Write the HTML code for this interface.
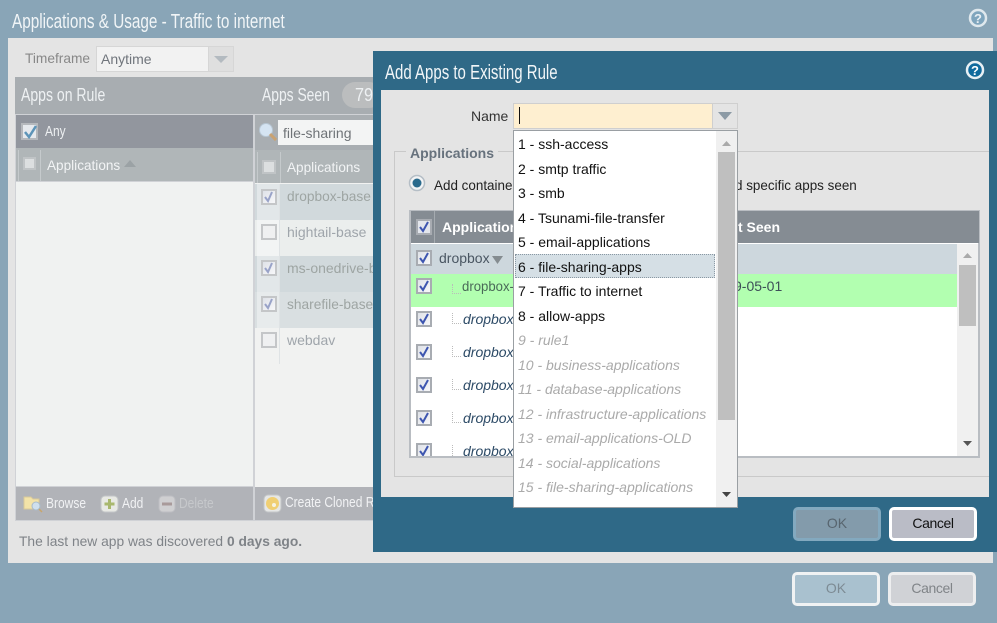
<!DOCTYPE html>
<html><head><meta charset="utf-8">
<style>
html,body{margin:0;padding:0}
body{width:997px;height:623px;overflow:hidden;position:relative;background:#89a5b7;font-family:"Liberation Sans",sans-serif;font-size:14px}
div,span.t{position:absolute;box-sizing:border-box}
.t{white-space:nowrap;line-height:18px;transform-origin:0 50%}
.cb{width:16px;height:16px;border:2px solid #a8acb2;background:linear-gradient(135deg,#dfe2e8,#f7f7f9)}
.cb svg{position:absolute;left:0;top:0}
.fb{border-color:#c4c6c8}
.btn{border:3px solid #fff;border-radius:5px;text-align:center;line-height:26px;font-size:14px}
.it{left:518px;color:#111;font-size:14px}
.dis{color:#aaa;font-style:italic}
.i{font-style:italic;color:#2c4a66}
</style></head><body>

<div class="t" style="left:12px;top:11px;color:#f1f5f7;font-size:20px;line-height:22px;transform:scaleX(.765)">Applications &amp; Usage - Traffic to internet</div>
<svg style="position:absolute;left:968px;top:8px" width="20" height="20"><circle cx="10" cy="10" r="8" fill="#7fa5bd" stroke="#dfe8ed" stroke-width="2.500"/><text x="10" y="15" font-size="13" font-weight="bold" fill="#e8eff3" text-anchor="middle" font-family="Liberation Sans">?</text></svg>

<div style="left:8px;top:38px;width:985px;height:525px;background:#e4e4e4"></div>
<div class="t" style="left:25px;top:49px;color:#888;font-size:14px;transform:scaleX(.98)">Timeframe</div>
<div style="left:96px;top:46px;width:138px;height:26px;background:#f2f2f2;border:1px solid #d6d6d6"></div>
<div style="left:208px;top:46px;width:26px;height:26px;background:#dfdfdf;border:1px solid #d6d6d6"></div>
<svg style="position:absolute;left:213px;top:55px" width="16" height="9"><path d="M1 1H15L8 8Z" fill="#b3bac0"/></svg>
<div class="t" style="left:101px;top:50px;color:#70757c;font-size:14px">Anytime</div>

<div style="left:15px;top:77px;width:358px;height:37px;background:#a8adb1"></div>
<div class="t" style="left:21px;top:85px;color:#eef1f3;font-size:18px;line-height:20px;transform:scaleX(.78)">Apps on Rule</div>
<div class="t" style="left:262px;top:85px;color:#eef1f3;font-size:18px;line-height:20px;transform:scaleX(.77)">Apps Seen</div>
<div style="left:342px;top:82px;width:40px;height:26px;border-radius:13px;background:#bbbdbe"></div>
<div class="t" style="left:355px;top:85px;color:#eef1f3;font-size:18px;line-height:20px;transform:scaleX(.9)">79</div>

<div style="left:15px;top:114px;width:358px;height:407px;background:#d0d2d6"></div>
<div style="left:16px;top:115px;width:237px;height:33px;background:#92969e"></div>
<div class="cb" style="left:21px;top:123px;width:17px;height:17px;border-color:#b5b8bc;background:#e6e9ed"><svg width="15" height="15"><path d="M2 7L6 12L13 1" fill="none" stroke="#5d94b8" stroke-width="2.500"/></svg></div>
<div class="t" style="left:45px;top:123px;color:#eef0f2;font-size:15px;transform:scaleX(.8)">Any</div>
<div style="left:16px;top:148px;width:237px;height:33px;background:#b0b6b8"></div>
<div style="left:18px;top:150px;width:1px;height:31px;background:#c5cacc"></div>
<div style="left:40px;top:150px;width:1px;height:31px;background:#c5cacc"></div>
<div class="cb" style="left:23px;top:157px;width:13px;height:13px;border-color:#c0c4c6;background:#dcdfe0"></div>
<div class="t" style="left:47px;top:156px;color:#f2f4f5;font-size:14px;transform:scaleX(.97)">Applications</div>
<svg style="position:absolute;left:123px;top:159px" width="14" height="9"><path d="M1 8H13L7 1Z" fill="#9ba2a5"/></svg>
<div style="left:16px;top:182px;width:237px;height:304px;background:#f0f2f1"></div>
<div style="left:16px;top:487px;width:237px;height:33px;background:#b1b3b8"></div>

<svg style="position:absolute;left:23px;top:495px" width="20" height="18"><path d="M1 2H8L10 4H16V14H1Z" fill="#f3e3a8" stroke="#d8c89a"/><circle cx="13" cy="11" r="4" fill="#cfe0ee" stroke="#a9bccb"/><path d="M16 14L19 17" stroke="#c9a56a" stroke-width="1.500"/></svg>
<div class="t" style="left:46px;top:495px;color:#f1f2f4;font-size:15px;transform:scaleX(.8)">Browse</div>
<svg style="position:absolute;left:100px;top:495px" width="19" height="18"><rect x="1" y="1" width="17" height="16" rx="4" fill="#e8e9e4" stroke="#c2c5c7"/><path d="M9.500 4V14M4.500 9H14.500" stroke="#a9b86e" stroke-width="3"/></svg>
<div class="t" style="left:122px;top:495px;color:#f1f2f4;font-size:15px;transform:scaleX(.8)">Add</div>
<svg style="position:absolute;left:158px;top:495px" width="18" height="18"><rect x="1" y="1" width="16" height="16" rx="4" fill="#cfcfd1" stroke="#bdbec2"/><path d="M4 9H14" stroke="#a89a9a" stroke-width="3"/></svg>
<div class="t" style="left:179px;top:495px;color:#c6c8cb;font-size:15px;transform:scaleX(.8)">Delete</div>

<div style="left:255px;top:115px;width:118px;height:35px;background:#a9aeb2"></div>
<svg style="position:absolute;left:258px;top:122px" width="19" height="19"><circle cx="8" cy="8" r="6.500" fill="#d5e4f2" stroke="#b7c6d3"/><path d="M12 12L18 18" stroke="#c9a271" stroke-width="3"/></svg>
<div style="left:278px;top:120px;width:95px;height:25px;background:#f3f4f4"></div>
<div class="t" style="left:283px;top:124px;color:#6f7377;font-size:14px">file-sharing</div>
<div style="left:255px;top:150px;width:118px;height:33px;background:#b0b6b8"></div>
<div style="left:257px;top:152px;width:1px;height:31px;background:#c5cacc"></div>
<div style="left:280px;top:152px;width:1px;height:31px;background:#c5cacc"></div>
<div class="cb" style="left:262px;top:160px;width:14px;height:14px;border-color:#c0c4c6;background:#dcdfe0"></div>
<div class="t" style="left:287px;top:158px;color:#f2f4f5;font-size:14px;transform:scaleX(.97)">Applications</div>

<div style="left:255px;top:183px;width:118px;height:304px;background:#f1f2f1"></div>
<div style="left:255px;top:184px;width:118px;height:36px;background:#d1d9dc"></div>
<div style="left:255px;top:220px;width:118px;height:36px;background:#ebeeed"></div>
<div style="left:255px;top:256px;width:118px;height:36px;background:#d1d9dc"></div>
<div style="left:255px;top:292px;width:118px;height:36px;background:#d9dfe1"></div>
<div style="left:257px;top:184px;width:22px;height:144px;background:rgba(255,255,255,.38)"></div>
<div style="left:279px;top:184px;width:1px;height:180px;background:#dfe3e5"></div>
<div class="cb fb" style="left:261px;top:189px"><svg width="12" height="12"><path d="M2 6L5 10L9 1" fill="none" stroke="#99a3c8" stroke-width="2"/></svg></div>
<div class="t" style="left:287px;top:187px;color:#9ea5a3;font-size:14px;transform:scaleX(.98)">dropbox-base</div>
<div class="cb fb" style="left:261px;top:224px;background:#eff0f1"></div>
<div class="t" style="left:287px;top:223px;color:#9fa5ab;font-size:14px">hightail-base</div>
<div class="cb fb" style="left:261px;top:260px"><svg width="12" height="12"><path d="M2 6L5 10L9 1" fill="none" stroke="#99a3c8" stroke-width="2"/></svg></div>
<div class="t" style="left:287px;top:259px;color:#9ea5a3;font-size:14px">ms-onedrive-b</div>
<div class="cb fb" style="left:261px;top:296px"><svg width="12" height="12"><path d="M2 6L5 10L9 1" fill="none" stroke="#99a3c8" stroke-width="2"/></svg></div>
<div class="t" style="left:287px;top:295px;color:#9ea5a3;font-size:14px;transform:scaleX(.98)">sharefile-base</div>
<div class="cb fb" style="left:261px;top:332px;background:#eff0f1"></div>
<div class="t" style="left:287px;top:331px;color:#9fa5ab;font-size:14px">webdav</div>

<div style="left:255px;top:487px;width:118px;height:33px;background:#b1b3b8"></div>
<svg style="position:absolute;left:263px;top:494px" width="19" height="19"><rect x="1" y="1" width="17" height="17" rx="4" fill="#e6e7e6" stroke="#c2c5c7"/><circle cx="9.500" cy="9.500" r="6.500" fill="#f0cf73"/><circle cx="11" cy="11" r="2" fill="#f6f3e4"/></svg>
<div class="t" style="left:285px;top:494px;color:#f1f2f4;font-size:15px;transform:scaleX(.8)">Create Cloned R</div>

<div class="t" style="left:19px;top:532px;color:#7f8388;font-size:14px;transform:scaleX(.986)">The last new app was discovered <b>0 days ago.</b></div>

<div class="btn" style="left:792px;top:572px;width:88px;height:34px;background:#a9c1cf;color:#7d8b94;border-color:#f0f2f3">OK</div>
<div class="btn" style="left:888px;top:572px;width:88px;height:34px;background:#d0d2d6;color:#808488;border-color:#edeeef;letter-spacing:-.4px">Cancel</div>

<!-- modal -->
<div style="left:373px;top:51px;width:624px;height:501px;background:#2f6987"></div>
<div class="t" style="left:385px;top:62px;color:#f2f6f8;font-size:20px;line-height:22px;transform:scaleX(.75)">Add Apps to Existing Rule</div>
<svg style="position:absolute;left:965px;top:60px" width="20" height="20"><circle cx="10" cy="10" r="8" fill="#0f6a9d" stroke="#e8f0f4" stroke-width="2.500"/><text x="10" y="15" font-size="13" font-weight="bold" fill="#fff" text-anchor="middle" font-family="Liberation Sans">?</text></svg>
<div style="left:381px;top:90px;width:608px;height:407px;background:#e4e4e4"></div>

<div class="t" style="left:471px;top:107px;color:#333;font-size:14px">Name</div>
<div style="left:513px;top:103px;width:200px;height:26px;background:#feefd0;border:1px solid #cfcfcf"></div>
<div style="left:519px;top:107px;width:1px;height:17px;background:#111"></div>
<div style="left:712px;top:103px;width:26px;height:26px;background:#e4e4e4;border:1px solid #cfcfcf"></div>
<svg style="position:absolute;left:717px;top:111px" width="16" height="10"><path d="M1 1H15L8 9Z" fill="#8c9aa5"/></svg>

<div style="left:394px;top:151px;width:595px;height:326px;border:1px solid #c9c9c9;border-right:0"></div>
<div class="t" style="left:406px;top:144px;padding:0 4px;background:#e4e4e4;color:#67727d;font-size:14px;font-weight:bold">Applications</div>

<svg style="position:absolute;left:408px;top:174px" width="18" height="18"><circle cx="9" cy="9" r="7.500" fill="#f3f4f5" stroke="#b5bec6" stroke-width="1.500"/><circle cx="9" cy="9" r="4.500" fill="#2a6a8c"/></svg>
<div class="t" style="left:434px;top:176px;color:#222;font-size:14px;transform:scaleX(.96)">Add containe</div>
<div class="t" style="left:735px;top:176px;color:#222;font-size:14px;transform:scaleX(.96)">d specific apps seen</div>

<!-- table -->
<div style="left:409px;top:210px;width:571px;height:248px;background:#fff;border:2px solid #b9bdc2;overflow:hidden"></div>
<div style="left:411px;top:211px;width:568px;height:32px;background:#858c93"></div>
<div style="left:434px;top:211px;width:1px;height:32px;background:#a5abb0"></div>
<div class="cb" style="left:416px;top:219px;background:#e3e6ec"><svg width="12" height="12"><path d="M2 6L5 10L10 1" fill="none" stroke="#3e56b0" stroke-width="2"/></svg></div>
<div class="t" style="left:442px;top:218px;color:#fff;font-size:14px;font-weight:bold">Application</div>
<div class="t" style="left:738px;top:218px;color:#fff;font-size:14px;font-weight:bold">t Seen</div>
<div style="left:411px;top:244px;width:546px;height:30px;background:#cdd7dd"></div>
<div class="cb" style="left:416px;top:250px"><svg width="12" height="12"><path d="M2 6L5 10L10 1" fill="none" stroke="#3e56b0" stroke-width="2"/></svg></div>
<div class="t" style="left:439px;top:249px;color:#4a5662;font-size:14px">dropbox</div>
<svg style="position:absolute;left:491px;top:255px" width="13" height="10"><path d="M1 1H12L6.500 9Z" fill="#858c90"/></svg>
<div style="left:411px;top:274px;width:546px;height:33px;background:#b2ffb0"></div>
<div class="cb" style="left:416px;top:278px"><svg width="12" height="12"><path d="M2 6L5 10L10 1" fill="none" stroke="#3e56b0" stroke-width="2"/></svg></div>
<div style="left:452px;top:284px;width:9px;height:10px;border-left:1px dotted #bbb;border-bottom:1px dotted #bbb"></div>
<div class="t" style="left:462px;top:277px;color:#4a6a58;font-size:14px;transform:scaleX(.94)">dropbox-</div>
<div class="t" style="left:734px;top:277px;color:#3d4f58;font-size:14px">9-05-01</div>

<div class="cb" style="left:416px;top:311px"><svg width="12" height="12"><path d="M2 6L5 10L10 1" fill="none" stroke="#3e56b0" stroke-width="2"/></svg></div>
<div style="left:452px;top:313px;width:9px;height:11px;border-left:1px dotted #bbb;border-bottom:1px dotted #bbb"></div>
<div class="t i" style="left:463px;top:310px">dropbox</div>
<div class="cb" style="left:416px;top:344px"><svg width="12" height="12"><path d="M2 6L5 10L10 1" fill="none" stroke="#3e56b0" stroke-width="2"/></svg></div>
<div style="left:452px;top:346px;width:9px;height:11px;border-left:1px dotted #bbb;border-bottom:1px dotted #bbb"></div>
<div class="t i" style="left:463px;top:343px">dropbox</div>
<div class="cb" style="left:416px;top:377px"><svg width="12" height="12"><path d="M2 6L5 10L10 1" fill="none" stroke="#3e56b0" stroke-width="2"/></svg></div>
<div style="left:452px;top:379px;width:9px;height:11px;border-left:1px dotted #bbb;border-bottom:1px dotted #bbb"></div>
<div class="t i" style="left:463px;top:376px">dropbox</div>
<div class="cb" style="left:416px;top:410px"><svg width="12" height="12"><path d="M2 6L5 10L10 1" fill="none" stroke="#3e56b0" stroke-width="2"/></svg></div>
<div style="left:452px;top:412px;width:9px;height:11px;border-left:1px dotted #bbb;border-bottom:1px dotted #bbb"></div>
<div class="t i" style="left:463px;top:409px">dropbox</div>
<div style="left:411px;top:443px;width:500px;height:13px;overflow:hidden">
<div class="cb" style="left:5px;top:0"><svg width="12" height="12"><path d="M2 6L5 10L10 1" fill="none" stroke="#3e56b0" stroke-width="2"/></svg></div>
<div style="left:41px;top:2px;width:1px;height:11px;border-left:1px dotted #bbb"></div>
<div class="t i" style="left:52px;top:-1px">dropbox</div>
</div>
<div style="left:957px;top:244px;width:21px;height:212px;background:#f0f0f0"></div>
<div style="left:959px;top:265px;width:17px;height:61px;background:#bfbfbf"></div>
<svg style="position:absolute;left:962px;top:252px" width="11" height="7"><path d="M1 6H10L5.500 1Z" fill="#aaa"/></svg>
<svg style="position:absolute;left:962px;top:440px" width="11" height="7"><path d="M1 1H10L5.500 6Z" fill="#555"/></svg>

<!-- dropdown -->
<div style="left:513px;top:130px;width:225px;height:378px;background:#fff;border:1px solid #9a9fa3"></div>
<div style="left:716px;top:131px;width:21px;height:376px;background:#f0f0f0"></div>
<div style="left:718px;top:152px;width:17px;height:268px;background:#bfbfbf"></div>
<svg style="position:absolute;left:721px;top:140px" width="11" height="7"><path d="M1 6H10L5.500 1Z" fill="#aaa"/></svg>
<svg style="position:absolute;left:721px;top:491px" width="11" height="7"><path d="M1 1H10L5.500 6Z" fill="#444"/></svg>
<div style="left:515px;top:254px;width:200px;height:24px;background:#d5dfe5;border:1px dotted #8a98a3"></div>
<div class="t it" style="top:135px">1 - ssh-access</div>
<div class="t it" style="top:160px">2 - smtp traffic</div>
<div class="t it" style="top:184px">3 - smb</div>
<div class="t it" style="top:209px">4 - Tsunami-file-transfer</div>
<div class="t it" style="top:233px">5 - email-applications</div>
<div class="t it" style="top:258px">6 - file-sharing-apps</div>
<div class="t it" style="top:282px">7 - Traffic to internet</div>
<div class="t it" style="top:307px">8 - allow-apps</div>
<div class="t it dis" style="top:331px;color:#aaa">9 - rule1</div>
<div class="t it dis" style="top:356px;color:#aaa">10 - business-applications</div>
<div class="t it dis" style="top:380px;color:#aaa">11 - database-applications</div>
<div class="t it dis" style="top:405px;color:#aaa">12 - infrastructure-applications</div>
<div class="t it dis" style="top:429px;color:#aaa">13 - email-applications-OLD</div>
<div class="t it dis" style="top:454px;color:#aaa">14 - social-applications</div>
<div class="t it dis" style="top:478px;color:#aaa">15 - file-sharing-applications</div>

<div class="btn" style="left:793px;top:507px;width:88px;height:34px;background:#839bab;color:#58656f;border-color:#83a9bf">OK</div>
<div class="btn" style="left:889px;top:507px;width:88px;height:34px;background:#babcc6;color:#111;letter-spacing:-.4px">Cancel</div>

</body></html>
